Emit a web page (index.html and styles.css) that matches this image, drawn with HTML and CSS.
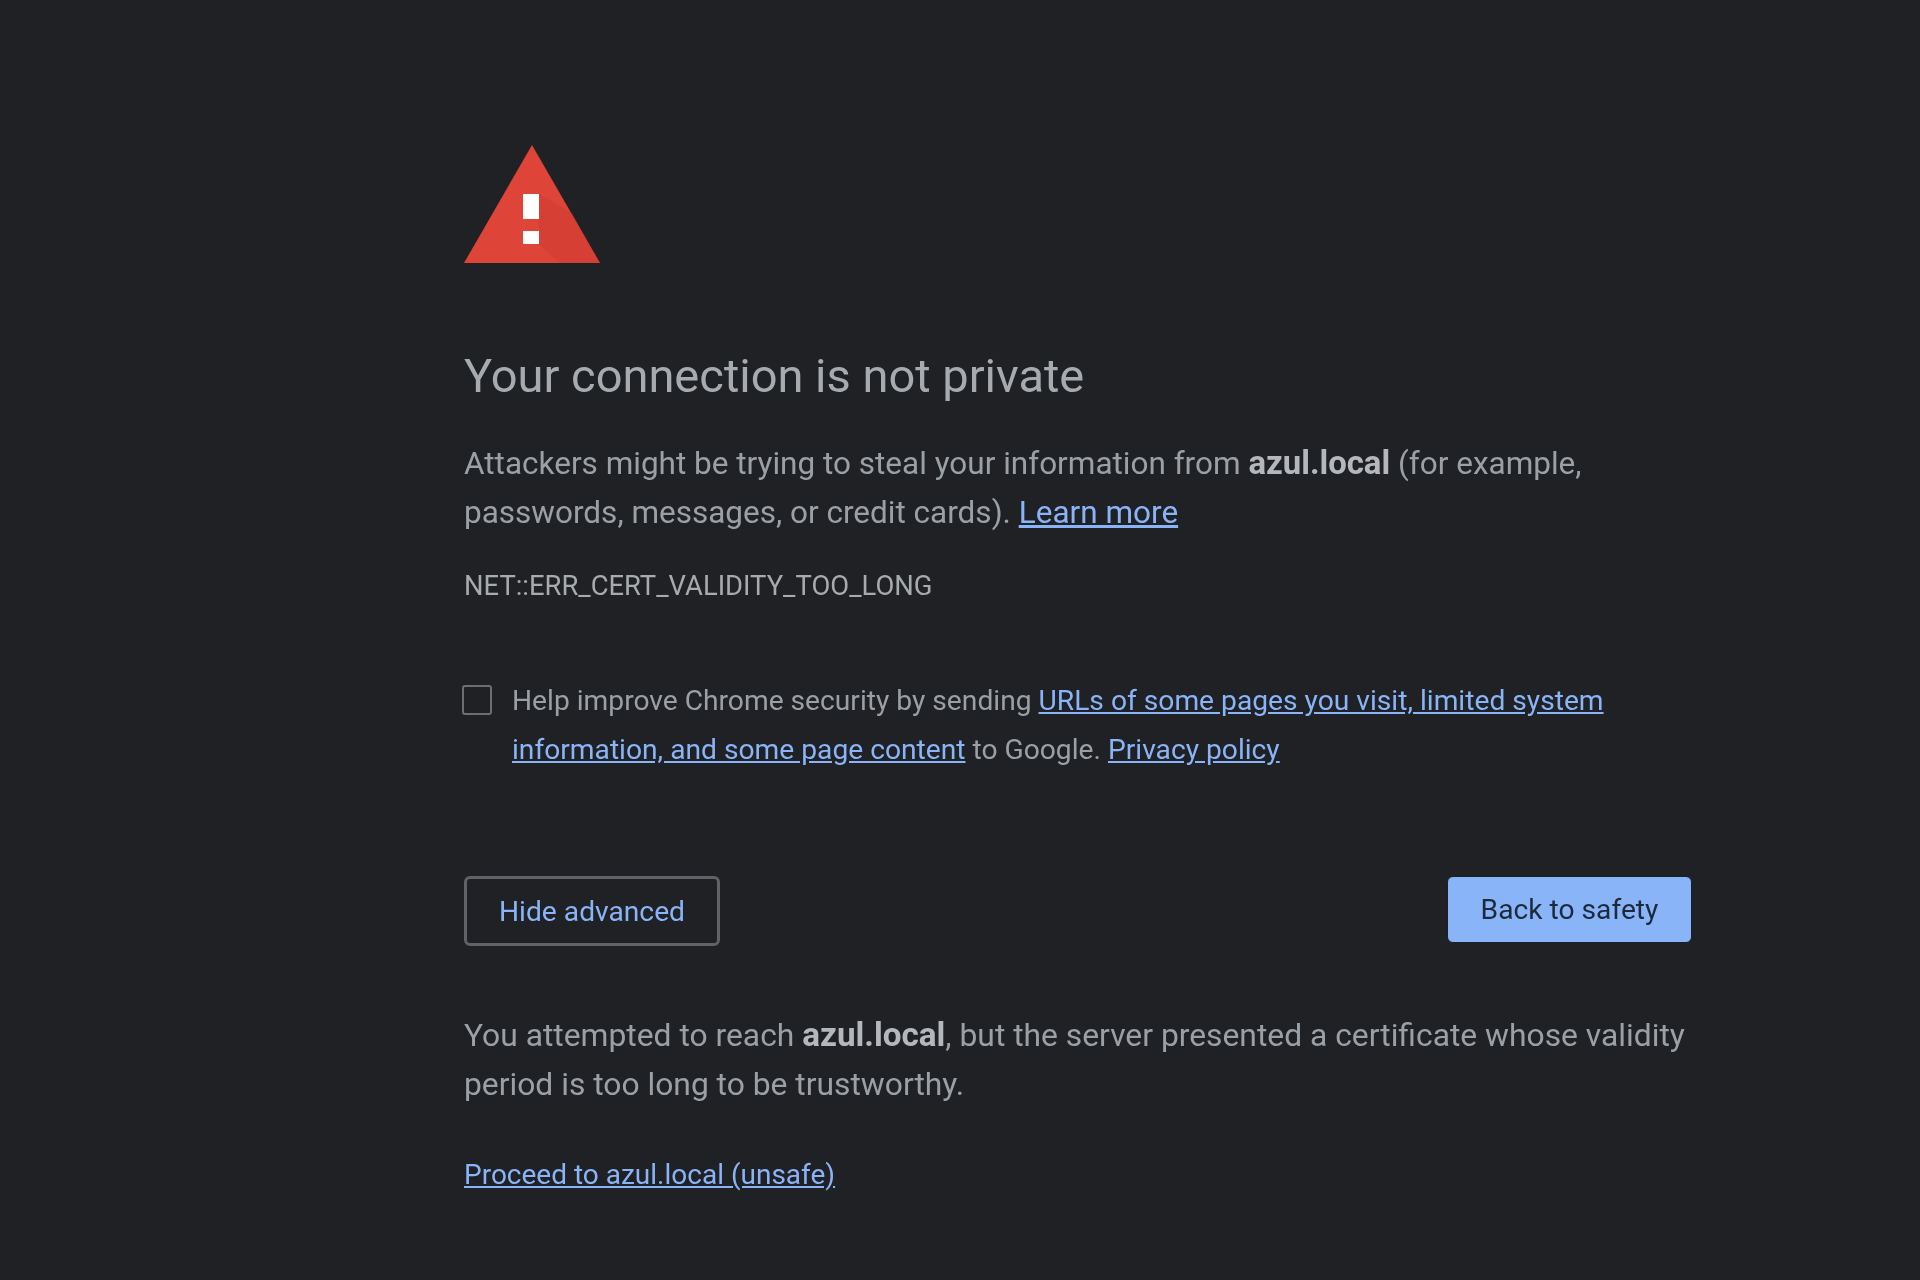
FILE: index.html
```html
<!DOCTYPE html>
<html lang="en">
<head>
<meta charset="utf-8">
<title>Privacy error</title>
<link rel="stylesheet" href="styles.css">
</head>
<body>
<main class="interstitial">
  <svg class="icon" viewBox="0 0 136 118" aria-hidden="true">
    <polygon class="tri" points="68,0 136,118 0,118"/>
    <polygon class="tri-shade" points="75,49 108,68 136,118 96,118 59,86 75,86 75,74 59,74"/>
    <rect class="mark" x="59" y="49" width="16" height="25"/>
    <rect class="mark" x="59" y="86" width="16" height="13"/>
  </svg>
  <h1 class="title">Your connection is not private</h1>
  <p class="body-text intro">Attackers might be trying to steal your information from <strong>azul.local</strong> (for example, passwords, messages, or credit cards). <a href="#">Learn more</a></p>
  <p class="code">NET::ERR_CERT_VALIDITY_TOO_LONG</p>
  <div class="opt-in">
    <span class="box"></span>
    <p class="opt-text">Help improve Chrome security by sending <a href="#">URLs of some pages you visit, limited system information, and some page content</a> to Google. <a href="#">Privacy policy</a></p>
  </div>
  <div class="actions">
    <button class="btn btn-secondary">Hide advanced</button>
    <button class="btn btn-primary">Back to safety</button>
  </div>
  <p class="body-text details">You attempted to reach <strong>azul.local</strong>, but the server presented a certificate whose validity period is too long to be trustworthy.</p>
  <p class="proceed"><a href="#">Proceed to azul.local (unsafe)</a></p>
</main>
</body>
</html>
```
FILE: styles.css
```css
* { box-sizing: border-box; }
html, body { margin: 0; height: 100%; }
body {
  background: #202124;
  color: #9aa0a6;
  font-family: Roboto, "Liberation Sans", Arial, sans-serif;
  min-height: 1280px;
  overflow: hidden;
}
.interstitial {
  width: 1228px;
  margin-left: 464px;
  padding-top: 145px;
  filter: blur(0.5px);
}
.icon { display: block; width: 136px; height: 118px; }
.tri { fill: #de4437; }
.tri-shade { fill: #c5392d; opacity: .3; }
.mark { fill: #fff; }
.title {
  margin: 85px 0 0;
  font-size: 47px;
  line-height: 56px;
  font-weight: 400;
  color: #a6abb0;
}
.body-text {
  margin: 35px 0 0;
  font-size: 31.8px;
  line-height: 49px;
  color: #9aa0a6;
}
.intro { font-size: 31.5px; }
strong { color: #b4b8bc; font-weight: 700; font-size: 1.045em; line-height: 0; }
a { color: #8ab4f8; text-decoration: underline; }
.code {
  margin: 33px 0 0;
  font-size: 27.4px;
  line-height: 32px;
  color: #a8abae;
}
.opt-in {
  display: flex;
  margin-top: 74px;
}
.box {
  flex: none;
  width: 30px;
  height: 30px;
  margin: 9px 20px 0 -2px;
  border: 2px solid #6b6e72;
  border-radius: 3px;
}
.opt-text {
  margin: 0;
  font-size: 28.2px;
  line-height: 49px;
  color: #9aa0a6;
}
.actions {
  display: flex;
  justify-content: space-between;
  align-items: flex-start;
  margin-top: 102px;
}
.btn {
  font-family: inherit;
  font-size: 28.2px;
  border-radius: 6px;
}
.btn-secondary {
  width: 256px;
  height: 70px;
  background: transparent;
  border: 3px solid #5f6266;
  color: #8ab4f8;
}
.btn-primary {
  width: 245px;
  height: 67px;
  background: #8ab4f8;
  border: 1px solid #16202e;
  color: #1c2a3c;
}
.details { margin-top: 65px; }
.proceed {
  margin: 41px 0 0;
  font-size: 28px;
  line-height: 49px;
}
```
